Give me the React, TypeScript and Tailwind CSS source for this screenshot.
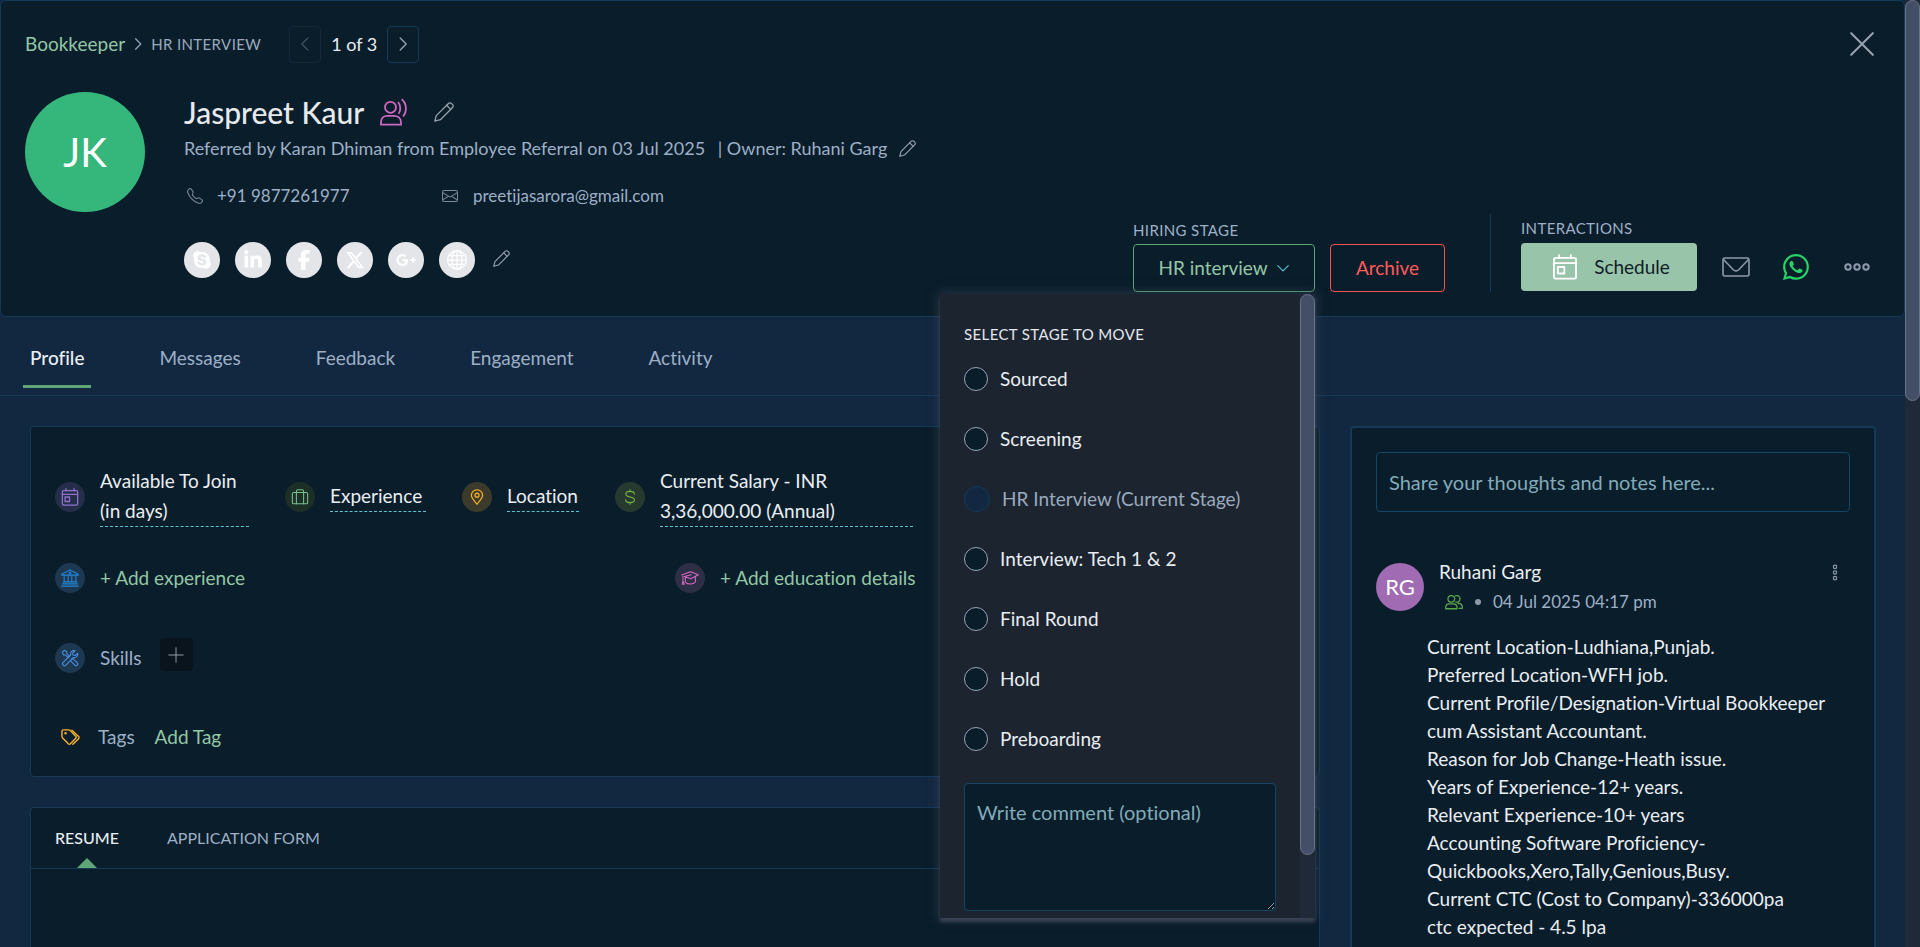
import { useState } from "react";
import type { ReactNode } from "react";
import clsx from "clsx";
import { BsEnvelope, BsGlobe, BsTelephone, BsWhatsapp } from "react-icons/bs";
import { FaFacebookF, FaGooglePlusG, FaLinkedinIn, FaSkype, FaXTwitter } from "react-icons/fa6";

type IconProps = { className?: string };

const STAGES = [
  "Sourced",
  "Screening",
  "HR Interview",
  "Interview: Tech 1 & 2",
  "Final Round",
  "Hold",
  "Preboarding"
];
const CURRENT_STAGE = "HR Interview";

const TABS = ["Profile", "Messages", "Feedback", "Engagement", "Activity"];

const SOCIALS = [
  { name: "Skype", Icon: FaSkype },
  { name: "LinkedIn", Icon: FaLinkedinIn },
  { name: "Facebook", Icon: FaFacebookF },
  { name: "X", Icon: FaXTwitter },
  { name: "Google Plus", Icon: FaGooglePlusG },
  { name: "Website", Icon: BsGlobe }
];

const NOTE_LINES = [
  "Current Location-Ludhiana,Punjab.",
  "Preferred Location-WFH job.",
  "Current Profile/Designation-Virtual Bookkeeper cum Assistant Accountant.",
  "Reason for Job Change-Heath issue.",
  "Years of Experience-12+ years.",
  "Relevant Experience-10+ years",
  "Accounting Software Proficiency-Quickbooks,Xero,Tally,Genious,Busy.",
  "Current CTC (Cost to Company)-336000pa",
  "ctc expected - 4.5 lpa"
];

function Svg({ className, children, width = 1.2 }: IconProps & { children: ReactNode; width?: number }) {
  return (
    <svg
      viewBox="0 0 20 20"
      fill="none"
      stroke="currentColor"
      strokeWidth={width}
      strokeLinecap="round"
      strokeLinejoin="round"
      className={className}
      aria-hidden="true"
    >
      {children}
    </svg>
  );
}

const ChevronIcon = ({ className }: IconProps) => (
  <Svg className={className} width={1.6}>
    <path d="M6.500 2.500 14 10l-7.500 7.500" />
  </Svg>
);

const PencilIcon = ({ className }: IconProps) => (
  <Svg className={className} width={1.3}>
    <path d="M.8 19.200 2.300 13.600 14.200 1.700c1-1 2.500-1 3.400-.1l.8.8c.9.9.9 2.400-.1 3.400L6.400 17.700.8 19.200Z" />
    <path d="m12.600 3.300 4.100 4.100" />
  </Svg>
);

const PersonVoiceIcon = ({ className }: IconProps) => (
  <svg viewBox="0 0 28 28" fill="none" stroke="currentColor" strokeWidth="1.800" className={className} aria-hidden="true">
    <circle cx="10.500" cy="9.300" r="5.500" />
    <path d="M1 26.700v-2.500c0-4.200 2.900-6.400 6.200-6.400h7c3.300 0 6.800 2.200 6.800 6.400v2.500H1Z" />
    <path d="M18 4.200c2.800 2.700 3 8.400.6 11.500M21.700 1.200c5.300 4.400 5.400 12.700 1.300 17.300" />
  </svg>
);

const EnvelopeIcon = ({ className }: IconProps) => (
  <svg viewBox="0 0 28 20" fill="none" stroke="currentColor" strokeWidth="1.600" strokeLinejoin="round" className={className} aria-hidden="true">
    <rect x="1" y="1" width="26" height="18" rx="2" />
    <path d="m1.500 2.500 9.800 10.200c1.500 1.500 3.900 1.500 5.400 0L26.500 2.500" />
  </svg>
);

const CalendarIcon = ({ className }: IconProps) => (
  <Svg className={className} width={1.400}>
    <rect x="1.500" y="3" width="17" height="16" rx="1.500" />
    <path d="M1.500 7h17M5.500 3V.8M14.500 3V.8" />
    <rect x="4.500" y="10" width="5" height="5" />
  </Svg>
);

const SuitcaseIcon = ({ className }: IconProps) => (
  <Svg className={className}>
    <rect x="1.500" y="5" width="17" height="12.500" rx="1.500" />
    <path d="M6 17.500v-14c0-1 .5-1.500 1.500-1.500h5c1 0 1.500.5 1.500 1.500v14" />
  </Svg>
);

const PinIcon = ({ className }: IconProps) => (
  <Svg className={className} width={1.600}>
    <path d="M10 19C7 15 3 11.500 3 7.800a7 6.800 0 0 1 14 0C17 11.500 13 15 10 19Z" />
    <circle cx="10" cy="7.800" r="2.500" />
  </Svg>
);

const DollarIcon = ({ className }: IconProps) => (
  <Svg className={className} width={1.400}>
    <path d="M10 1v2M10 17v2M15.500 6.500c0-2-2.500-3.500-5.500-3.500S4.800 4.300 4.800 6.500c0 4.800 10.800 2.200 10.800 7 0 2.200-2.600 3.500-5.600 3.500s-5.500-1.500-5.500-3.500" />
  </Svg>
);

const BankIcon = ({ className }: IconProps) => (
  <Svg className={className}>
    <path d="M10 1 .8 5.800v1h18.400v-1L10 1ZM1.500 16.500h17M.8 19h18.400" />
    <path d="M3.500 7v7M8 7v7M12 7v7M16.500 7v7M2.500 14.300h15" />
    <circle cx="10" cy="4.700" r="1" />
  </Svg>
);

const GraduationIcon = ({ className }: IconProps) => (
  <Svg className={className}>
    <path d="M.8 6.700 10.500 3l8.800 3.500-8.500 4.300-7-2.500 7.500-2M4.800 9v5.500c2.500 3 9 3 11.200 0V8.500M2.200 8v5M1.300 16.800l1-3.500 1.200 3.500Z" />
  </Svg>
);

const ToolsIcon = ({ className }: IconProps) => (
  <Svg className={className}>
    <path d="M1.500 3.500 3.500 1.500 6.500 3v2.200l3 3-1.500 1.500-3-3H2.800L1.500 3.500Z" />
    <path d="m11.500 11.500 1.200-1.200 5.500 5.200c1.500 1.500-1.200 4.200-2.700 2.700l-5-5.200" />
    <path d="M18.500 4.800c.7 3-1.600 5.200-4.700 4.700l-8.700 8.800c-1.500 1.400-4.400-1.300-3.200-3l8.900-8.800c-.6-3 1.800-5.400 4.700-4.700l-2.500 2.700.4 2.200 2.300.5 2.800-2.400Z" />
  </Svg>
);

const TagsIcon = ({ className }: IconProps) => (
  <Svg className={className} width={1.500}>
    <path d="M1 3.500C1 2.600 1.600 2 2.500 2h5.700c.5 0 .9.200 1.300.5l6 6.200c.7.700.7 1.500 0 2.200l-5.600 5.800c-.7.700-1.500.7-2.200 0L1.500 10.200c-.3-.4-.5-.8-.5-1.300V3.500Z" />
    <path d="M11.500 2.300 18.500 9c.7.700.7 1.500 0 2.200l-6 6" />
    <circle cx="4.800" cy="5.600" r=".6" fill="currentColor" />
  </Svg>
);

const UsersIcon = ({ className }: IconProps) => (
  <Svg className={className} width={1.400}>
    <circle cx="7" cy="6.500" r="3.700" />
    <path d="M.8 17.500v-1.500c0-2.500 1.800-4 4-4h4.500c2.200 0 4 1.500 4 4v1.500H.8Z" />
    <path d="M11.700 3.200c2.500-1.200 5 .7 5 3.300 0 2.700-2.500 4.500-4.800 3.400M14.500 11.500c3 0 4.700 1.500 4.700 4v1.500h-3.500" />
  </Svg>
);

function DotsIcon({ className }: IconProps) {
  return (
    <svg viewBox="0 0 26 8" fill="none" stroke="currentColor" strokeWidth="2" className={className} aria-hidden="true">
      <circle cx="4" cy="4" r="2.700" />
      <circle cx="13" cy="4" r="2.700" />
      <circle cx="22" cy="4" r="2.700" />
    </svg>
  );
}

function Bubble({ className, children }: { className: string; children: ReactNode }) {
  return (
    <span className={clsx("flex size-[30px] shrink-0 items-center justify-center rounded-full", className)}>
      {children}
    </span>
  );
}

function Fact({ icon, children, className }: { icon: ReactNode; children: ReactNode; className?: string }) {
  return (
    <div className="flex items-center gap-[15px]">
      {icon}
      <button className={clsx("border-b border-dashed border-[#5cc3d0] text-left leading-[30px]", className)}>
        {children}
      </button>
    </div>
  );
}

function StageMenu() {
  const [stage, setStage] = useState("");

  return (
    <div className="absolute top-[50px] right-0 z-20 flex h-[624px] w-[375px] bg-[#1c2430] shadow-[0_0_10px_2px_rgba(62,72,92,0.5),0_4px_3px_rgba(70,78,92,0.7)]">
      <div className="flex-1 overflow-hidden px-6 pt-[30px]">
        <fieldset>
          <legend className="mb-[5px] text-[15px] leading-5 tracking-wide text-[#e3e8ee]">SELECT STAGE TO MOVE</legend>
          {STAGES.map((s) => {
            const current = s === CURRENT_STAGE;
            return (
              <label
                key={s}
                className={clsx("flex h-[60px] items-center gap-3", current ? "text-[#9aaabd]" : "text-[#e9eef2]")}
              >
                <input
                  type="radio"
                  name="stage"
                  value={s}
                  disabled={current}
                  checked={stage === s}
                  onChange={() => setStage(s)}
                  className="size-6 appearance-none rounded-full border border-[#99a3b3] bg-[#0a1d2b] checked:border-[6px] checked:border-[#5fa777] disabled:size-[26px] disabled:border-[#153a57] disabled:bg-[#122840]"
                />
                {current ? `${s} (Current Stage)` : s}
              </label>
            );
          })}
        </fieldset>
        <textarea
          aria-label="Comment"
          placeholder="Write comment (optional)"
          className="mt-[14px] block h-32 w-full resize rounded border border-[#164462] bg-[#0a1d2b] px-3 py-3.5 text-xl leading-7 scheme-dark outline-none placeholder:text-[#82abb8]"
        />
      </div>
      <div className="w-[15px] bg-[#1f2937]">
        <div className="h-[561px] rounded-full border border-[#6b7487] bg-[#434f66]" />
      </div>
    </div>
  );
}

function Header() {
  const [menuOpen, setMenuOpen] = useState(true);

  return (
    <header className="rounded-md border border-[#143a56] bg-[#0a1d2b] px-6 py-6">
      <div className="flex h-[38px] items-center justify-between pr-[6px]">
        <div className="flex items-center">
          <a href="#job" className="text-[#93c7a5]">Bookkeeper</a>
          <ChevronIcon className="mx-1.5 size-3.5 text-[#9aaabd]" />
          <span className="text-[15px] tracking-wide text-[#9aaabd]">HR INTERVIEW</span>
          <div className="ml-7 flex items-center gap-2.5">
            <button
              disabled
              aria-label="Previous candidate"
              className="flex h-[37px] w-8 items-center justify-center rounded border border-[#11293b] text-[#435060]"
            >
              <ChevronIcon className="size-4 rotate-180" />
            </button>
            <span className="text-lg text-[#e9eef2]">1 of 3</span>
            <button
              aria-label="Next candidate"
              className="flex h-[37px] w-8 items-center justify-center rounded border border-[#153a57] text-[#9aa5b5]"
            >
              <ChevronIcon className="size-4" />
            </button>
          </div>
        </div>
        <button aria-label="Close" className="text-[#98a2ae]">
          <Svg className="size-6" width={1.700}>
            <path d="m1 1 18 18M19 1 1 19" />
          </Svg>
        </button>
      </div>

      <div className="mt-[29px] flex min-h-[200px] pr-2.5">
        <div className="flex size-[120px] shrink-0 items-center justify-center rounded-full bg-[#35b67a] text-[40px] text-white">
          JK
        </div>
        <div className="ml-[39px] text-lg text-[#9db0c6]">
          <div className="flex h-10 items-center">
            <h1 className="text-[30px] font-medium text-[#e6eaed]">Jaspreet Kaur</h1>
            <PersonVoiceIcon className="ml-4 size-7 text-[#cf68c0]" />
            <button aria-label="Edit name" className="ml-[26px] text-[#98a2ae]">
              <PencilIcon className="size-5" />
            </button>
          </div>
          <div className="flex h-8 items-center">
            <p>
              Referred by Karan Dhiman from Employee Referral on 03 Jul 2025 <span className="ml-2">| Owner: Ruhani Garg</span>
            </p>
            <button aria-label="Edit owner" className="ml-3 text-[#98a2ae]">
              <PencilIcon className="size-[17px]" />
            </button>
          </div>
          <div className="mt-4 flex h-8 items-center text-[17px]">
            <span className="flex w-[258px] items-center gap-3.5 pl-[3px]">
              <BsTelephone className="size-4 text-[#7b8796]" />
              +91 9877261977
            </span>
            <span className="flex items-center gap-[15px]">
              <BsEnvelope className="size-4 text-[#7b8796]" />
              preetijasarora@gmail.com
            </span>
          </div>
          <div className="mt-[30px] flex items-center gap-[15px]">
            {SOCIALS.map(({ name, Icon }) => (
              <a
                key={name}
                href="#social"
                aria-label={name}
                className="flex size-9 items-center justify-center rounded-full bg-[#e4e5e9] text-white"
              >
                <Icon className="size-5" />
              </a>
            ))}
            <button aria-label="Edit links" className="mb-1 ml-[3px] text-[#98a2ae]">
              <PencilIcon className="size-[17px]" />
            </button>
          </div>
        </div>

        <div className="ml-auto flex items-end self-end">
          <div>
            <div className="mb-1 text-[15px] leading-5 tracking-wide text-[#9db0c6]">HIRING STAGE</div>
            <div className="flex gap-[15px]">
              <div className="relative">
                <button
                  onClick={() => setMenuOpen(!menuOpen)}
                  aria-expanded={menuOpen}
                  className="flex h-12 w-[182px] items-center justify-center gap-2 rounded border border-[#5fa777] text-[#93c7a5]"
                >
                  HR interview
                  <ChevronIcon className="size-3.5 rotate-90 text-[#5cc3d0]" />
                </button>
                {menuOpen && <StageMenu />}
              </div>
              <button className="h-12 w-[115px] rounded border border-[#f6504f] text-[#ff5a5a]">Archive</button>
            </div>
          </div>
          <div className="mr-[30px] ml-[45px] h-[78px] w-px bg-[#153a57]" />
          <div className="pb-px">
            <div className="mb-[5px] text-[15px] leading-5 tracking-wide text-[#9db0c6]">INTERACTIONS</div>
            <div className="flex items-center text-[#8d99ab]">
              <button className="flex h-12 w-44 items-center justify-center gap-4 rounded bg-[#98c4aa] pl-1 text-[#101d26]">
                <CalendarIcon className="size-[26px] text-white" />
                Schedule
              </button>
              <button aria-label="Send email" className="ml-[25px]">
                <EnvelopeIcon className="h-5 w-7" />
              </button>
              <button aria-label="WhatsApp" className="ml-[33px] text-[#25d366]">
                <BsWhatsapp className="size-[26px]" />
              </button>
              <button aria-label="More" className="ml-[35px]">
                <DotsIcon className="h-2 w-[26px]" />
              </button>
            </div>
          </div>
        </div>
      </div>
    </header>
  );
}

function ProfileCard() {
  return (
    <section className="rounded border border-[#143a56] bg-[#0a1d2b] px-6 pt-[39px] pb-6 text-[#e9eef2]">
      <div className="flex h-[61px] items-center gap-9">
        <Fact
          className="w-[149px]"
          icon={<Bubble className="bg-[#242e48]"><CalendarIcon className="size-[18px] text-[#9173cf]" /></Bubble>}
        >
          Available To Join (in days)
        </Fact>
        <Fact
          className="w-24"
          icon={<Bubble className="bg-[#1c3027]"><SuitcaseIcon className="size-[18px] text-[#78bd8b]" /></Bubble>}
        >
          Experience
        </Fact>
        <Fact
          className="w-[72px]"
          icon={<Bubble className="bg-[#3c3b2b]"><PinIcon className="size-4 text-[#f5b125]" /></Bubble>}
        >
          Location
        </Fact>
        <Fact
          className="w-[253px]"
          icon={<Bubble className="bg-[#263a2f]"><DollarIcon className="size-4 text-[#76b340]" /></Bubble>}
        >
          Current Salary - INR 3,36,000.00 (Annual)
        </Fact>
      </div>

      <div className="mt-9 grid grid-cols-2 text-[#93c7a5]">
        <div className="flex items-center gap-[15px]">
          <Bubble className="bg-[#1d3850]"><BankIcon className="size-[18px] text-[#2585d8]" /></Bubble>
          <button>+ Add experience</button>
        </div>
        <div className="flex items-center gap-[15px]">
          <Bubble className="bg-[#2d2f47]"><GraduationIcon className="size-[18px] text-[#cf68c0]" /></Bubble>
          <button>+ Add education details</button>
        </div>
      </div>

      <div className="mt-[45px] flex items-start text-[#9db0c6]">
        <Bubble className="mt-[5px] bg-[#1d3850]"><ToolsIcon className="size-[18px] text-[#4a90e2]" /></Bubble>
        <span className="mt-[5px] ml-[15px] leading-[30px]">Skills</span>
        <button
          aria-label="Add skill"
          className="ml-[18px] flex size-[33px] items-center justify-center rounded bg-[#0a141c] text-[#98a2ae]"
        >
          <Svg className="size-4">
            <path d="M10 1v18M1 10h18" />
          </Svg>
        </button>
      </div>

      <div className="mt-[49px] flex h-[30px] items-center text-[#9db0c6]">
        <TagsIcon className="ml-1.5 size-[19px] text-[#fbb02d]" />
        <span className="ml-[18px]">Tags</span>
        <button className="ml-5 text-[#93c7a5]">Add Tag</button>
      </div>
    </section>
  );
}

function ResumeCard() {
  return (
    <section className="flex-1 rounded-t border border-b-0 border-[#143a56] bg-[#0a1d2b] text-base">
      <div className="flex h-[61px] gap-12 border-b border-[#143a56] px-6">
        <button className="relative font-medium text-[#e9eef2]">
          RESUME
          <span className="absolute bottom-0 left-1/2 -translate-x-1/2 border-x-[10px] border-b-[10px] border-x-transparent border-b-[#5fa777]" />
        </button>
        <button className="text-[#9db0c6]">APPLICATION FORM</button>
      </div>
    </section>
  );
}

function NotesCard() {
  return (
    <aside className="w-[526px] shrink-0 rounded-t border-x-2 border-t-2 border-[#143a56] bg-[#0a1d2b] px-6 pt-6">
      <input
        type="text"
        aria-label="Notes"
        placeholder="Share your thoughts and notes here..."
        className="h-[60px] w-full rounded border border-[#164462] bg-transparent px-3 text-xl outline-none placeholder:text-[#82abb8]"
      />
      <article className="mt-[51px]">
        <div className="flex">
          <div className="flex size-12 items-center justify-center rounded-full bg-[#a06bb2] text-[22px] text-white">RG</div>
          <div className="-mt-1.5 ml-[15px] flex-1">
            <div className="leading-[30px] text-[#e9eef2]">Ruhani Garg</div>
            <div className="flex h-[30px] items-center text-[17px] text-[#9db0c6]">
              <UsersIcon className="ml-1.5 size-[18px] text-[#58a94d]" />
              <span className="mx-3 size-1.5 rounded-full bg-[#8d99ab]" />
              04 Jul 2025 04:17 pm
            </div>
          </div>
          <button aria-label="Note options" className="-mt-px h-5 w-6 text-[#8d99ab]">
            <DotsIcon className="h-[5px] w-[18px] rotate-90" />
          </button>
        </div>
        <div className="mt-4 ml-[51px] text-[#e9eef2]">
          {NOTE_LINES.map((line) => (
            <p key={line} className="leading-7">{line}</p>
          ))}
        </div>
      </article>
    </aside>
  );
}

export default function App() {
  const [tab, setTab] = useState("Profile");

  return (
    <div className="flex h-screen overflow-hidden bg-[#122840] font-['Lato','Roboto',sans-serif] text-[19px] leading-7 [font-variant-ligatures:none]">
      <main className="flex min-w-0 flex-1 flex-col">
        <Header />

        <nav className="flex shrink-0 gap-[61px] border-b border-[#143a56] px-[23px]">
          {TABS.map((t) => (
            <button
              key={t}
              onClick={() => setTab(t)}
              className={clsx(
                "mb-[7px] h-[71px] border-b-3 px-[7px] pt-[13px]",
                t === tab ? "border-[#5fa777] font-medium text-[#e9eef2]" : "border-transparent text-[#9db0c6]"
              )}
            >
              {t}
            </button>
          ))}
        </nav>

        <div className="flex min-h-0 flex-1 gap-[30px] pt-[30px] pr-[29px] pl-[30px]">
          <div className="flex min-w-0 flex-1 flex-col gap-[30px]">
            <ProfileCard />
            <ResumeCard />
          </div>
          <NotesCard />
        </div>
      </main>

      {/* Scroll track */}
      <div className="w-[15px] shrink-0 bg-[#1f2937]">
        <div className="h-[401px] rounded-full border border-[#6b7487] bg-[#434f66]" />
      </div>
    </div>
  );
}
